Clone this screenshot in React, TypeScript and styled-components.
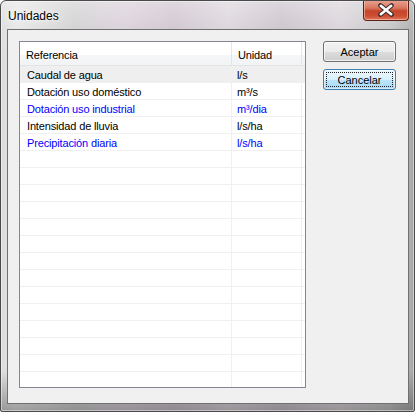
import React from "react";
import styled, { createGlobalStyle } from "styled-components";

const Global = createGlobalStyle`
  html, body { margin: 0; padding: 0; background: #ffffff; }
  #root { width: 415px; height: 412px; }
  * { box-sizing: border-box; }
`;

const Window = styled.div`
  width: 415px;
  height: 412px;
  display: flex;
  flex-direction: column;
  border: 1px solid #4a4a4a;
  border-radius: 6px 6px 2px 2px;
  overflow: hidden;
  background:
    linear-gradient(to bottom, rgba(255,255,255,0.35) 0px, rgba(255,255,255,0.1) 28px, rgba(0,0,0,0) 60px, rgba(0,0,0,0.0) 370px, rgba(40,40,40,0.4) 412px),
    linear-gradient(to right, #dcdcdc 0%, #e6e6e6 4%, #cfcfcf 18%, #d9ced9 30%, #cdc2cd 42%, #dad4da 55%, #c9c1c9 68%, #d8d2d8 82%, #c4c4c4 94%, #a8a8a8 100%);
  box-shadow: inset 0 0 0 1px rgba(255, 255, 255, 0.45);
  font-family: "Liberation Sans", Arial, sans-serif;
`;

const TitleBar = styled.div`
  height: 28px;
  flex: none;
  display: flex;
  justify-content: space-between;
  align-items: flex-start;
  padding-left: 7px;
`;

const Title = styled.span`
  align-self: center;
  margin-top: 1px;
  font-size: 12px;
  color: #000;
  text-shadow: 0 0 6px rgba(255, 255, 255, 0.9), 0 0 3px rgba(255, 255, 255, 0.9);
`;

const CloseButton = styled.div`
  width: 46px;
  height: 21px;
  margin-top: -1px;
  margin-right: 5px;
  display: flex;
  align-items: center;
  justify-content: center;
  border: 1px solid #5a2216;
  border-top: none;
  border-radius: 0 0 4px 4px;
  background: linear-gradient(to bottom, #e9a593 0%, #d9775f 40%, #c4442a 55%, #cd4f33 80%, #e0775c 100%);
  box-shadow: inset 0 0 0 1px rgba(255, 210, 190, 0.55);
`;

const Client = styled.div`
  flex: 1;
  margin: 0 5px 7px 6px;
  border: 1px solid #707070;
  background: #f0f0f0;
  display: flex;
  align-items: flex-start;
  padding: 11px 0 0 11px;
`;

const Grid = styled.div`
  width: 287px;
  height: 347px;
  border: 1px solid #828790;
  background: #ffffff;
  overflow: hidden;
  flex: none;
`;

const HeaderRow = styled.div`
  display: grid;
  grid-template-columns: 212px 70px 1fr;
  height: 24px;
  border-bottom: 1px solid #e3e4e6;
  background: linear-gradient(to bottom, #ffffff 0%, #ffffff 55%, #f6f7f8 56%, #f2f3f5 100%);
`;

const HeaderCell = styled.div<{ $pad: number; $divider?: boolean }>`
  display: flex;
  align-items: center;
  padding-left: ${(p) => p.$pad}px;
  padding-top: 2px;
  font-size: 11px;
  letter-spacing: -0.15px;
  color: #000;
  border-right: ${(p) => (p.$divider ? "1px solid #e5e5e5" : "none")};
`;

const Row = styled.div<{ $selected?: boolean }>`
  display: grid;
  grid-template-columns: 212px 70px 1fr;
  height: 17px;
  border-bottom: 1px solid #f0f0f0;
  background: ${(p) => (p.$selected ? "#efefef" : "#ffffff")};
`;

const Cell = styled.div<{ $pad: number; $blue?: boolean; $divider?: boolean }>`
  display: flex;
  align-items: center;
  padding-left: ${(p) => p.$pad}px;
  padding-top: 2px;
  font-size: 11px;
  letter-spacing: -0.15px;
  white-space: nowrap;
  color: ${(p) => (p.$blue ? "#0000ff" : "#000000")};
  border-right: ${(p) => (p.$divider ? "1px solid #f0f0f0" : "none")};
`;

const ButtonColumn = styled.div`
  display: flex;
  flex-direction: column;
  gap: 7px;
  margin-left: 17px;
`;

const Button = styled.div<{ $focused?: boolean }>`
  width: 73px;
  height: 21px;
  display: flex;
  align-items: center;
  justify-content: center;
  padding-top: 1px;
  font-size: 11px;
  color: #000;
  border-radius: 3px;
  border: 1px solid ${(p) => (p.$focused ? "#3c7fb1" : "#707070")};
  background: ${(p) =>
    p.$focused
      ? "linear-gradient(to bottom, #eaf6fd 0%, #d9f0fc 50%, #bee6fd 51%, #a7d9f5 100%)"
      : "linear-gradient(to bottom, #f2f2f2 0%, #ebebeb 50%, #dddddd 51%, #cfcfcf 100%)"};
  box-shadow: inset 0 0 0 1px ${(p) => (p.$focused ? "rgba(255,255,255,0.5)" : "rgba(255,255,255,0.7)")};
  position: relative;
`;

const FocusRect = styled.span`
  position: absolute;
  inset: 2px;
  border: 1px dotted #222;
  border-radius: 1px;
  pointer-events: none;
`;

type Item = { ref: string; unit: string; blue?: boolean; selected?: boolean };

const items: Item[] = [
  { ref: "Caudal de agua", unit: "l/s", selected: true },
  { ref: "Dotación uso doméstico", unit: "m³/s" },
  { ref: "Dotación uso industrial", unit: "m³/dia", blue: true },
  { ref: "Intensidad de lluvia", unit: "l/s/ha" },
  { ref: "Precipitación diaria", unit: "l/s/ha", blue: true },
];

const TOTAL_ROWS = 19;

export default function App() {
  const rows: Item[] = [...items];
  while (rows.length < TOTAL_ROWS) rows.push({ ref: "", unit: "" });

  return (
    <>
      <Global />
      <Window>
        <TitleBar>
          <Title>Unidades</Title>
          <CloseButton>
            <svg width="18" height="14" viewBox="0 0 18 14">
              <path
                d="M3.5 2.5 L14.5 11.5 M14.5 2.5 L3.5 11.5"
                stroke="#3a2a2a"
                strokeWidth="4.6"
                strokeLinecap="round"
                fill="none"
              />
              <path
                d="M3.8 2.8 L14.2 11.2 M14.2 2.8 L3.8 11.2"
                stroke="#ffffff"
                strokeWidth="2.6"
                strokeLinecap="round"
                fill="none"
              />
            </svg>
          </CloseButton>
        </TitleBar>
        <Client>
          <Grid>
            <HeaderRow>
              <HeaderCell $pad={6} $divider>Referencia</HeaderCell>
              <HeaderCell $pad={6} $divider>Unidad</HeaderCell>
              <HeaderCell $pad={0} />
            </HeaderRow>
            {rows.map((r, i) => (
              <Row key={i} $selected={r.selected}>
                <Cell $pad={7} $blue={r.blue} $divider>{r.ref}</Cell>
                <Cell $pad={5} $blue={r.blue} $divider>{r.unit}</Cell>
                <Cell $pad={0} />
              </Row>
            ))}
          </Grid>
          <ButtonColumn>
            <Button>Aceptar</Button>
            <Button $focused>
              Cancelar
              <FocusRect />
            </Button>
          </ButtonColumn>
        </Client>
      </Window>
    </>
  );
}
